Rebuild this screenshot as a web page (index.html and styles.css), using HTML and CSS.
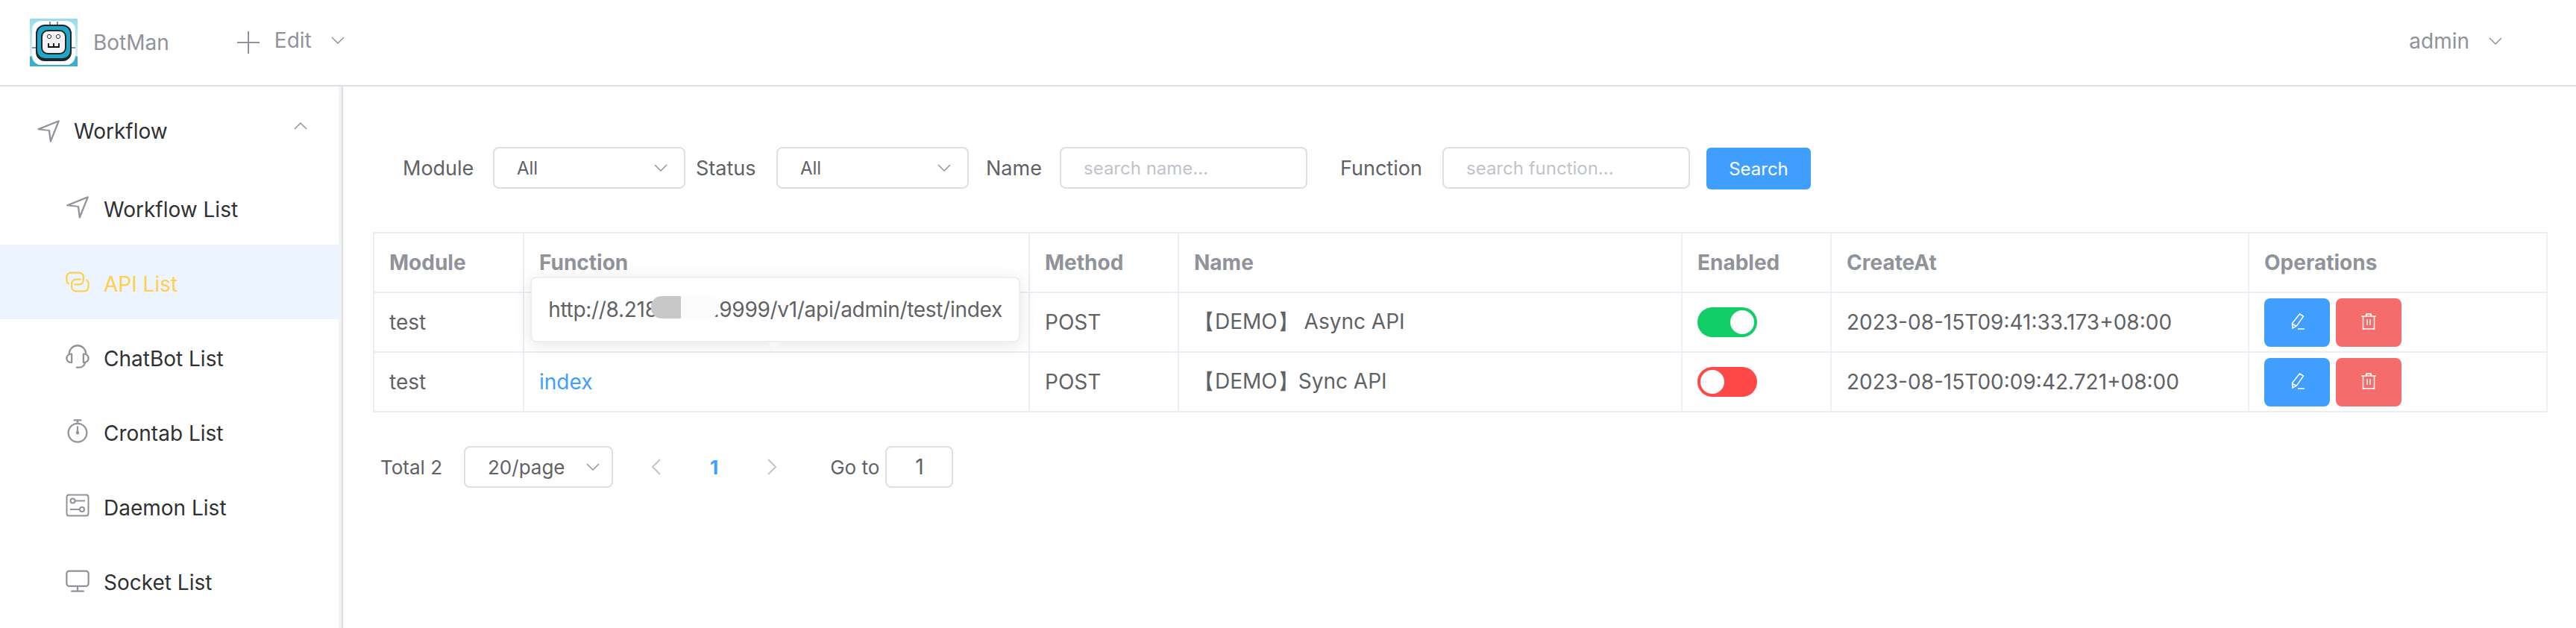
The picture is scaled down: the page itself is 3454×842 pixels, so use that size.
FILE: index.html
```html
<!DOCTYPE html>
<html lang="en">
<head>
<meta charset="utf-8">
<title>BotMan</title>
<link rel="stylesheet" href="styles.css">
</head>
<body>
<header class="topbar">
  <svg class="logo" viewBox="0 0 64 64" aria-hidden="true">
    <defs><linearGradient id="lg" x1="0" y1="0" x2="0" y2="1"><stop offset="0" stop-color="#96dcef"/><stop offset=".78" stop-color="#d8f1f7"/><stop offset=".8" stop-color="#38afcb"/><stop offset="1" stop-color="#38afcb"/></linearGradient></defs>
    <rect width="64" height="64" fill="url(#lg)"/>
    <rect x="3" y="3" width="58" height="59" rx="12" fill="#fff"/>
    <path d="M3 39h7M54 39h7M27 4v5M37 4v5" stroke="#222" stroke-width="1"/>
    <rect x="8" y="8" width="48" height="49" rx="12" fill="#1f2630"/>
    <rect x="10" y="10" width="44" height="43" rx="10" fill="#1fa8c4"/>
    <rect x="15" y="15" width="34" height="33" rx="9" fill="#1f2630"/>
    <rect x="17" y="17" width="30" height="29" rx="7" fill="#f4f4f4"/>
    <circle cx="26" cy="24" r="2.600" fill="#fff" stroke="#333" stroke-width="1"/>
    <circle cx="38" cy="24" r="2.600" fill="#fff" stroke="#333" stroke-width="1"/>
    <path d="M25 33v5h14v-5M32 33v5" fill="none" stroke="#111" stroke-width="1.800"/>
  </svg>
  <span class="brand">BotMan</span>
  <svg class="plus" viewBox="0 0 30 30" aria-hidden="true"><path d="M15 0v30M0 15h30"/></svg>
  <span class="edit">Edit</span>
  <svg class="chev edit-chev" viewBox="0 0 18 10" aria-hidden="true"><path d="M1 1l8 8 8-8"/></svg>
  <span class="user">admin</span>
  <svg class="chev user-chev" viewBox="0 0 18 10" aria-hidden="true"><path d="M1 1l8 8 8-8"/></svg>
</header>
<div class="layout">
  <aside class="sidebar">
    <div class="menu-title">
      <svg class="ico" viewBox="0 0 1024 1024" aria-hidden="true"><path d="M249.600 417.088l319.744 43.072 39.168 310.272L845.120 178.880 249.600 417.088zm-129.024 47.168a32 32 0 0 1-7.680-61.440l777.792-311.040a32 32 0 0 1 41.600 41.600l-310.400 777.920a32 32 0 0 1-61.440-7.680l-50.240-398.464-389.632-41.336z"/></svg>
      <span>Workflow</span>
      <svg class="chev menu-chev" viewBox="0 0 18 10" aria-hidden="true"><path d="M1 9l8-8 8 8"/></svg>
    </div>
    <ul class="submenu">
      <li class="item"><svg class="ico" viewBox="0 0 1024 1024" aria-hidden="true"><path d="M249.600 417.088l319.744 43.072 39.168 310.272L845.120 178.880 249.600 417.088zm-129.024 47.168a32 32 0 0 1-7.680-61.440l777.792-311.040a32 32 0 0 1 41.600 41.600l-310.400 777.920a32 32 0 0 1-61.440-7.680l-50.240-398.464-389.632-41.336z"/></svg>Workflow List</li>
      <li class="item active"><svg class="ico" viewBox="0 0 1024 1024" aria-hidden="true"><path d="M640 384v64H448a128 128 0 0 0-128 128v128a128 128 0 0 0 128 128h320a128 128 0 0 0 128-128V576a128 128 0 0 0-64-110.848V394.880c74.560 26.368 128 97.472 128 181.056v128a192 192 0 0 1-192 192H448a192 192 0 0 1-192-192V576a192 192 0 0 1 192-192h192z"/><path d="M384 640v-64h192a128 128 0 0 0 128-128V320a128 128 0 0 0-128-128H256a128 128 0 0 0-128 128v128a128 128 0 0 0 64 110.848v70.272A192.064 192.064 0 0 1 64 448V320a192 192 0 0 1 192-192h320a192 192 0 0 1 192 192v128a192 192 0 0 1-192 192H384z"/></svg>API List</li>
      <li class="item"><svg class="ico" viewBox="0 0 1024 1024" aria-hidden="true"><path d="M864 409.600a192 192 0 0 1-37.888 349.440A256.064 256.064 0 0 1 576 960h-96a32 32 0 1 1 0-64h96a192.064 192.064 0 0 0 181.120-128H736a32 32 0 0 1-32-32V416a32 32 0 0 1 32-32h32c10.368 0 20.544.832 30.528 2.432a288 288 0 0 0-573.056 0A193.235 193.235 0 0 1 256 384h32a32 32 0 0 1 32 32v320a32 32 0 0 1-32 32h-32a192 192 0 0 1-96-358.400 352 352 0 0 1 704 0zM256 448a128 128 0 1 0 0 256V448zm640 128a128 128 0 0 0-128-128v256a128 128 0 0 0 128-128z"/></svg>ChatBot List</li>
      <li class="item"><svg class="ico" viewBox="0 0 1024 1024" aria-hidden="true"><path d="M512 896a320 320 0 1 0 0-640 320 320 0 0 0 0 640zm0 64a384 384 0 1 1 0-768 384 384 0 0 1 0 768z"/><path d="M512 320a32 32 0 0 1 32 32l-.512 224a32 32 0 1 1-64 0L480 352a32 32 0 0 1 32-32z"/><path d="M448 576a64 64 0 1 0 128 0 64 64 0 1 0-128 0zm96-448v128h-64V128h-96a32 32 0 0 1 0-64h256a32 32 0 1 1 0 64h-96z"/></svg>Crontab List</li>
      <li class="item"><svg class="ico ico-line" viewBox="0 0 36 36" aria-hidden="true"><rect x="3.500" y="3.500" width="29" height="28" rx="3"/><circle cx="11.500" cy="11.500" r="3"/><circle cx="24" cy="23" r="3"/><path d="M14.500 11.500h13.500M8 23h13"/></svg>Daemon List</li>
      <li class="item"><svg class="ico" viewBox="0 0 1024 1024" aria-hidden="true"><path d="M544 768v128h192a32 32 0 1 1 0 64H288a32 32 0 1 1 0-64h192V768H192A128 128 0 0 1 64 640V256a128 128 0 0 1 128-128h640a128 128 0 0 1 128 128v384a128 128 0 0 1-128 128H544zM192 192a64 64 0 0 0-64 64v384a64 64 0 0 0 64 64h640a64 64 0 0 0 64-64V256a64 64 0 0 0-64-64H192z"/></svg>Socket List</li>
    </ul>
  </aside>
  <main class="content">
    <form class="filters">
      <label class="flabel l-module">Module</label>
      <div class="field select"><span>All</span><svg class="chev" viewBox="0 0 18 10" aria-hidden="true"><path d="M1 1l8 8 8-8"/></svg></div>
      <label class="flabel l-status">Status</label>
      <div class="field select"><span>All</span><svg class="chev" viewBox="0 0 18 10" aria-hidden="true"><path d="M1 1l8 8 8-8"/></svg></div>
      <label class="flabel l-name">Name</label>
      <div class="field input"><span class="ph">search name...</span></div>
      <label class="flabel l-func">Function</label>
      <div class="field input"><span class="ph">search function...</span></div>
      <button type="button" class="search">Search</button>
    </form>
    <div class="table-wrap">
      <table class="tbl">
        <colgroup><col class="c1"><col class="c2"><col class="c3"><col class="c4"><col class="c5"><col class="c6"><col class="c7"></colgroup>
        <thead><tr><th>Module</th><th>Function</th><th>Method</th><th>Name</th><th>Enabled</th><th>CreateAt</th><th>Operations</th></tr></thead>
        <tbody>
          <tr><td>test</td><td><a class="link">index</a></td><td>POST</td><td>【DEMO】 Async API</td><td><span class="sw on"></span></td><td>2023-08-15T09:41:33.173+08:00</td><td><div class="ops"><button type="button" class="op blue"><svg viewBox="0 0 22 22" aria-hidden="true"><path d="M14.500 1l5 3-9 13-5.500 3-.5-6.500zM4 14l6.500 3.500M12 21h9"/></svg></button><button type="button" class="op red"><svg viewBox="0 0 22 22" aria-hidden="true"><path d="M1 4h20M8 4V1h6v3M3.500 4v17h15V4M9 8v8M13 8v8"/></svg></button></div></td></tr>
          <tr><td>test</td><td><a class="link">index</a></td><td>POST</td><td>【DEMO】Sync API</td><td><span class="sw off"></span></td><td>2023-08-15T00:09:42.721+08:00</td><td><div class="ops"><button type="button" class="op blue"><svg viewBox="0 0 22 22" aria-hidden="true"><path d="M14.500 1l5 3-9 13-5.500 3-.5-6.500zM4 14l6.500 3.500M12 21h9"/></svg></button><button type="button" class="op red"><svg viewBox="0 0 22 22" aria-hidden="true"><path d="M1 4h20M8 4V1h6v3M3.500 4v17h15V4M9 8v8M13 8v8"/></svg></button></div></td></tr>
        </tbody>
      </table>
      <div class="tooltip">
        <span class="tip-text">http://8.218.xx.xx:9999/v1/api/admin/test/index</span>
        <i class="blur"></i>
        <i class="arrow"></i>
      </div>
    </div>
    <div class="pager">
      <span class="total">Total 2</span>
      <div class="field size"><span>20/page</span><svg class="chev" viewBox="0 0 18 10" aria-hidden="true"><path d="M1 1l8 8 8-8"/></svg></div>
      <svg class="arrow-ico prev" viewBox="0 0 12 22" aria-hidden="true"><path d="M11 1L1 11l10 10"/></svg>
      <span class="page">1</span>
      <svg class="arrow-ico next" viewBox="0 0 12 22" aria-hidden="true"><path d="M1 1l10 10L1 21"/></svg>
      <span class="goto">Go to</span>
      <div class="field jump">1</div>
    </div>
  </main>
</div>
</body>
</html>
```
FILE: styles.css
```css
* { box-sizing: border-box; }
html, body { margin: 0; height: 100%; }
body { font-family: Inter, "Noto Sans", sans-serif; font-size: 28px; color: #606266; background: #fff; overflow: hidden; }
.topbar { height: 116px; border-bottom: 2px solid #dcdfe6; display: flex; align-items: center; padding-left: 40px; }
.logo { width: 64px; height: 64px; flex: none; }
.brand { margin-left: 21px; color: #909399; }
.plus { width: 30px; height: 30px; margin-left: 91px; fill: none; stroke: #909399; stroke-width: 2; }
.edit { margin-left: 20px; color: #909399; margin-bottom: 6px; }
.chev { width: 18px; height: 10px; fill: none; stroke: #909399; stroke-width: 1.500; flex: none; }
.edit-chev { margin-left: 26px; margin-bottom: 6px; }
.user { margin-left: auto; color: #909399; margin-bottom: 4px; }
.user-chev { margin-left: 26px; margin-right: 99px; margin-bottom: 4px; }
.layout { display: flex; height: 726px; }
.sidebar { width: 460px; flex: none; border-right: 2px solid #dcdfe6; box-shadow: inset -4px 0 0 #f2f3f5; padding-top: 10px; color: #303133; }
.menu-title { height: 100px; display: flex; align-items: center; padding-left: 47px; padding-right: 46px; }
.menu-title .menu-chev { margin-left: auto; margin-bottom: 14px; }
.ico { width: 36px; height: 36px; fill: #909399; flex: none; margin-right: 16px; }
.ico-line { fill: none; stroke: #909399; stroke-width: 2; }
.submenu { list-style: none; margin: 2px 4px 0 0; padding: 0; }
.item { height: 100px; display: flex; align-items: center; padding-left: 86px; padding-top: 6px; }
.item .ico { margin-right: 17px; margin-top: -6px; }
.item.active { background: #ecf5ff; color: #ffd04b; }
.item.active .ico { fill: #ffd04b; }
.content { flex: 1; padding: 81px 38px 0 40px; min-width: 0; }
.filters { display: flex; align-items: center; height: 56px; padding-left: 40px; font-size: 27px; }
.flabel { flex: none; }
.l-module { width: 121px; }
.l-status { width: 108px; margin-left: 14px; }
.l-name { width: 99px; margin-left: 23px; }
.l-func { width: 137px; margin-left: 44px; }
.field { border: 2px solid #dcdfe6; border-radius: 8px; height: 56px; display: flex; align-items: center; flex: none; background: #fff; }
.select { width: 258px; padding: 0 22px 0 30px; justify-content: space-between; font-size: 24px; }
.input { width: 332px; padding-left: 30px; font-size: 24px; }
.ph { color: #c0c4cc; }
.search { width: 140px; height: 56px; margin: 2px 0 0 22px; border: 0; border-radius: 6px; background: #409eff; color: #fff; font: inherit; font-size: 24px; padding: 0; }
.table-wrap { position: relative; margin-top: 58px; }
.tbl { width: 100%; table-layout: fixed; border-collapse: collapse; border: 2px solid #ebeef5; }
.tbl th, .tbl td { border: 2px solid #ebeef5; height: 80px; padding: 0 20px; text-align: left; font-size: 28px; white-space: nowrap; }
.tbl th { color: #909399; font-weight: 700; }
.c1 { width: 201px; } .c2 { width: 678px; } .c3 { width: 200px; } .c4 { width: 675px; } .c5 { width: 200px; } .c6 { width: 560px; }
.link { color: #409eff; }
.sw { display: block; width: 80px; height: 40px; border-radius: 20px; position: relative; }
.sw::after { content: ""; position: absolute; top: 4px; width: 32px; height: 32px; border-radius: 50%; background: #fff; }
.sw.on { background: #13ce66; }
.sw.on::after { right: 4px; }
.sw.off { background: #ff4949; }
.sw.off::after { left: 4px; }
.ops { display: flex; gap: 8px; }
.op { width: 88px; height: 65px; border: 0; border-radius: 8px; padding: 0; display: flex; align-items: center; justify-content: center; }
.op svg { width: 22px; height: 22px; margin-bottom: 2px; fill: none; stroke: #fff; stroke-width: 1.500; }
.blue { background: #409eff; }
.red { background: #f56c6c; }
.tooltip { position: absolute; left: 211px; top: 60px; width: 657px; height: 88px; background: #fff; border: 2px solid #ebeef5; border-radius: 8px; box-shadow: 0 4px 24px rgba(0,0,0,.1); display: flex; align-items: center; justify-content: center; white-space: nowrap; }
.tip-text { letter-spacing: -.3px; }
.blur { position: absolute; left: 160px; top: 24px; width: 91px; height: 30px; border-radius: 14px; background: linear-gradient(90deg, #c8c8c8 0 44%, #fbfbfb 44% 100%); }
.arrow { position: absolute; left: 319px; bottom: -9px; width: 14px; height: 14px; background: #f7f8fa; transform: rotate(45deg); clip-path: polygon(100% 0, 100% 100%, 0 100%); }
.pager { display: flex; align-items: center; margin-top: 45px; height: 56px; padding-left: 10px; font-size: 26px; }
.total { width: 112px; flex: none; }
.size { width: 200px; justify-content: space-between; padding: 0 16px 0 30px; }
.arrow-ico { width: 12px; height: 22px; fill: none; stroke: #c0c4cc; stroke-width: 2; flex: none; }
.prev { margin-left: 52px; }
.page { color: #409eff; font-weight: 700; margin-left: 66px; }
.next { margin-left: 66px; }
.goto { margin-left: 72px; }
.jump { width: 91px; margin-left: 8px; justify-content: center; font-size: 28px; }
```
